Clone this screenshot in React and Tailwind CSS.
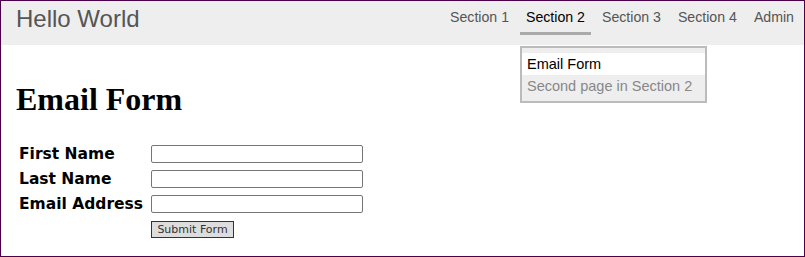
import React from "react";

const navItems = ["Section 1", "Section 2", "Section 3", "Section 4", "Admin"];

export default function App() {
  return (
    <div className="relative w-[805px] h-[257px] border border-[#4b004b] bg-white overflow-hidden">
      <header className="h-[44px] bg-[#eeeeee] flex justify-between">
        <div className="pl-[15px] pt-[4px] text-[24px] leading-[28px] text-[#555555] font-['Liberation_Sans',Arial,sans-serif]">
          Hello World
        </div>
        <nav className="flex gap-[5px] pr-[4px] font-['Liberation_Sans',Arial,sans-serif] text-[14.15px] leading-[16px]">
          {navItems.map((item) => (
            <div
              key={item}
              className={
                item === "Section 2"
                  ? "px-[6px] pt-[8px] pb-[7px] h-[34px] border-b-[3px] border-[#aaaaaa] text-black"
                  : "px-[6px] pt-[8px] pb-[7px] h-[34px] text-[#555555]"
              }
            >
              {item}
            </div>
          ))}
        </nav>
      </header>

      <div className="absolute left-[519px] top-[45px] w-[187px] border-2 border-[#bbbbbb] bg-[#eeeeee] pt-[5px] pb-[4px] font-['Liberation_Sans',Arial,sans-serif] text-[14.5px] leading-[22px]">
        <div className="bg-white pl-[5px] text-black">Email Form</div>
        <div className="pl-[5px] text-[#888888]">Second page in Section 2</div>
      </div>

      <main className="pl-[15px]">
        <h1 className="mt-[36px] text-[32px] leading-[37px] font-bold text-black font-['Liberation_Serif','Times_New_Roman',serif]">
          Email Form
        </h1>
        <form className="mt-[27px] ml-[3px] grid grid-cols-[132px_auto] gap-y-[7px] items-center font-['DejaVu_Sans',Verdana,sans-serif]">
          <label className="text-[15.5px] font-bold text-black leading-[18px]">First Name</label>
          <input type="text" className="w-[212px] h-[18px] border border-[#767676] rounded-[2px] bg-white" />
          <label className="text-[15.5px] font-bold text-black leading-[18px]">Last Name</label>
          <input type="text" className="w-[212px] h-[18px] border border-[#767676] rounded-[2px] bg-white" />
          <label className="text-[15.5px] font-bold text-black leading-[18px] whitespace-nowrap">Email Address</label>
          <input type="text" className="w-[212px] h-[18px] border border-[#767676] rounded-[2px] bg-white" />
          <div />
          <div className="pt-[1px]">
            <button
              type="button"
              className="w-[83px] h-[17px] border border-[#333333] bg-[#dddddd] text-[#333333] text-[11px] leading-[15px] font-['DejaVu_Sans',Tahoma,sans-serif] flex items-center justify-center"
            >
              Submit Form
            </button>
          </div>
        </form>
      </main>
    </div>
  );
}
